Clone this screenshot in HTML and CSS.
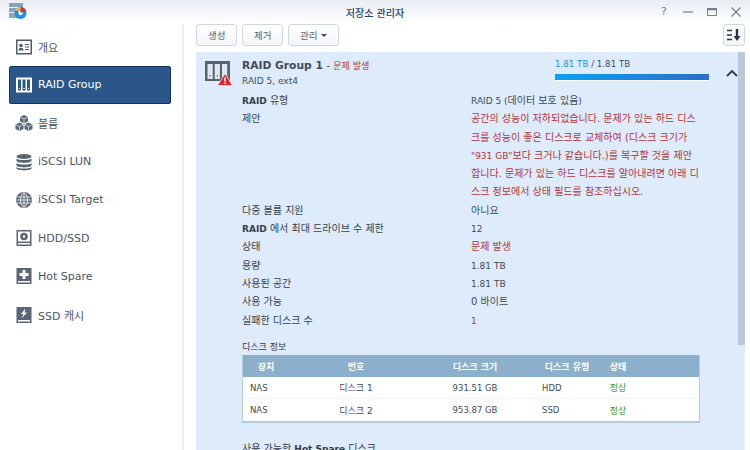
FILE: index.html
```html
<!DOCTYPE html>
<html lang="ko">
<head>
<meta charset="utf-8">
<title>저장소 관리자</title>
<link rel="stylesheet" href="styles.css">
</head>
<body>
<div class="window">
  <header class="titlebar">
    <svg class="app-icon" width="28" height="24" viewBox="0 0 28 24">
      <rect x="9" y="4" width="14" height="15" fill="#8aa2bb"/>
      <rect x="9" y="8" width="14" height="1" fill="#e8eef4"/>
      <rect x="9" y="13" width="14" height="1" fill="#e8eef4"/>
      <circle cx="20.500" cy="14" r="6" fill="#1a8fe6"/>
      <circle cx="20.500" cy="14" r="2.200" fill="#fff"/>
      <path d="M20.500 8a6 6 0 0 1 5.500 3.500l-5.500 2.500z" fill="#d9342b"/>
      <path d="M15 12a6 6 0 0 1 5.500-4v3.500z" fill="#f2b632"/>
    </svg>
    <div class="title">저장소 관리자</div>
    <div class="win-controls">
      <span class="help">?</span>
      <svg width="12" height="12" viewBox="0 0 12 12"><path d="M1 6h10" stroke="#6f7d8a" stroke-width="1.200"/></svg>
      <svg width="12" height="12" viewBox="0 0 12 12"><path d="M1.500 2.500h9v7h-9z" fill="none" stroke="#6f7d8a"/><path d="M1.500 3.500h9" stroke="#6f7d8a" stroke-width="1.500"/></svg>
      <svg width="12" height="12" viewBox="0 0 12 12"><path d="M1.500 1.500l9 9M10.500 1.500l-9 9" stroke="#6f7d8a" stroke-width="1.100"/></svg>
    </div>
  </header>
  <div class="body">
    <nav class="sidebar">
      <a class="nav-item">
        <svg class="nav-icon" viewBox="0 0 18 18"><rect x="1" y="1.500" width="16" height="15" fill="#4f5b69"/><rect x="2.500" y="3" width="13" height="12" fill="#fff"/><circle cx="6" cy="7.500" r="1.800" fill="#4f5b69"/><path d="M3.500 12.500c0-2 1-2.700 2.500-2.700s2.500.7 2.500 2.700z" fill="#4f5b69"/><path d="M10 6.500h4M10 9h4M10 11.500h4" stroke="#4f5b69" stroke-width="1.100"/></svg>
        <span>개요</span>
      </a>
      <a class="nav-item active">
        <svg class="nav-icon" viewBox="0 0 18 18"><rect x="1" y="1.500" width="16" height="15" fill="#fff"/><rect x="3" y="3.500" width="3" height="11" fill="#2a5688"/><rect x="7.500" y="3.500" width="3" height="11" fill="#2a5688"/><rect x="12" y="3.500" width="3" height="11" fill="#2a5688"/><path d="M4.500 12v1M9 12v1M13.500 12v1" stroke="#fff"/></svg>
        <span>RAID Group</span>
      </a>
      <a class="nav-item">
        <svg class="nav-icon" viewBox="0 0 18 18"><g fill="#5a6673"><path d="M9 1l4 2v4.500l-4 2-4-2V3z"/><path d="M4.500 8.500l4 2V15l-4 2-4-2v-4.500z"/><path d="M13.500 8.500l4 2V15l-4 2-4-2v-4.500z"/></g><path d="M5 3l4 2 4-2M.500 10.500l4 2 4-2M9.500 10.500l4 2 4-2M9 5v4M4.500 12.500v4M13.500 12.500v4" stroke="#fff" stroke-width=".7" fill="none"/></svg>
        <span>볼륨</span>
      </a>
      <a class="nav-item">
        <svg class="nav-icon" viewBox="0 0 18 18"><g fill="#5a6673"><ellipse cx="9" cy="3.500" rx="7.500" ry="2.500"/><path d="M1.500 5.500C3 7.500 15 7.500 16.500 5.500V8c-1 2.500-14 2.500-15 0z"/><path d="M1.500 10c1.500 2 13.500 2 15 0v2.500c-1 2.500-14 2.500-15 0z"/><path d="M1.500 14c1.500 2 13.500 2 15 0v1.500c-1 2.500-14 2.500-15 0z"/></g></svg>
        <span>iSCSI LUN</span>
      </a>
      <a class="nav-item">
        <svg class="nav-icon" viewBox="0 0 18 18"><circle cx="9" cy="9" r="8" fill="#5a6673"/><g fill="none" stroke="#fff" stroke-width=".8"><ellipse cx="9" cy="9" rx="3.500" ry="7"/><path d="M9 1.500v15M2 6h14M2 12h14M1.500 9h15"/></g></svg>
        <span>iSCSI Target</span>
      </a>
      <a class="nav-item">
        <svg class="nav-icon" viewBox="0 0 18 18"><rect x="1.500" y="1" width="15" height="16" fill="#5a6673"/><rect x="3" y="2.500" width="12" height="10" fill="#fff"/><circle cx="9" cy="7.500" r="3.800" fill="#5a6673"/><circle cx="9" cy="7.500" r="1.200" fill="#fff"/><rect x="3" y="14" width="12" height="1.500" fill="#fff"/></svg>
        <span>HDD/SSD</span>
      </a>
      <a class="nav-item">
        <svg class="nav-icon" viewBox="0 0 18 18"><rect x="1.500" y="1" width="15" height="16" fill="#5a6673"/><rect x="3" y="14" width="12" height="1.500" fill="#fff"/><path d="M9 3v9M4.500 7.500h9" stroke="#fff" stroke-width="2.800"/></svg>
        <span>Hot Spare</span>
      </a>
      <a class="nav-item">
        <svg class="nav-icon" viewBox="0 0 18 18"><rect x="1.500" y="1" width="15" height="16" fill="#5a6673"/><rect x="3" y="14" width="12" height="1.500" fill="#fff"/><path d="M10.500 2.500L6 8h2.500l-2 4.500L12 6.500H9.500z" fill="#fff"/></svg>
        <span>SSD 캐시</span>
      </a>
    </nav>
    <main class="main">
      <div class="toolbar">
        <button class="btn">생성</button>
        <button class="btn">제거</button>
        <button class="btn">관리<i class="caret"></i></button>
        <button class="btn sort">
          <svg width="16" height="14" viewBox="0 0 16 14"><path d="M1 2.500h5M1 7h5M1 11.500h5" stroke="#2b3641" stroke-width="1.600"/><path d="M11 1v8" stroke="#2b3641" stroke-width="2.400"/><path d="M7.500 8h7L11 13z" fill="#2b3641"/></svg>
        </button>
      </div>
      <div class="panel-wrap">
        <section class="panel">
          <div class="group-head">
            <svg class="raid-icon" width="28" height="28" viewBox="0 0 28 28">
              <rect x="0" y="2" width="25" height="20" fill="#59636e"/>
              <rect x="2.500" y="5" width="5.200" height="15" fill="#dfe8f2"/>
              <rect x="9.700" y="5" width="5.200" height="15" fill="#dfe8f2"/>
              <rect x="17" y="5" width="5.200" height="15" fill="#dfe8f2"/>
              <path d="M5 16v1.500M12.300 16v1.500M19.600 16v1.500" stroke="#59636e"/>
              <path d="M20 14.500L27.500 26.500H12.500z" fill="#e0262c" stroke="#dfe9f6" stroke-width=".8"/>
              <path d="M20 18.500v4M20 23.500v1.500" stroke="#fff" stroke-width="1.500"/>
            </svg>
            <div class="group-title">
              <div class="group-name"><strong>RAID Group 1</strong> - <span class="danger small">문제 발생</span></div>
              <div class="group-sub">RAID 5, ext4</div>
            </div>
            <div class="usage">
              <div class="usage-text"><span class="used">1.81 TB</span> / 1.81 TB</div>
              <div class="bar"><div class="bar-fill"></div></div>
            </div>
            <svg class="chevron" width="12" height="8" viewBox="0 0 12 8"><path d="M1 7l5-5 5 5" fill="none" stroke="#1d3e66" stroke-width="1.800"/></svg>
          </div>
          <dl class="details">
            <dt><b class="lat">RAID</b> 유형</dt><dd><span class="lat">RAID 5 (</span>데이터 보호 있음<span class="lat">)</span></dd>
            <dt>제안</dt><dd class="danger">공간의 성능이 저하되었습니다. 문제가 있는 하드 디스<br>크를 성능이 좋은 디스크로 교체하여 (디스크 크기가<br><span class="lat">"931 GB"</span>보다 크거나 같습니다.)를 복구할 것을 제안<br>합니다. 문제가 있는 하드 디스크를 알아내려면 아래 디<br>스크 정보에서 상태 필드를 참조하십시오.</dd>
            <dt>다중 볼륨 지원</dt><dd>아니요</dd>
            <dt><b class="lat">RAID</b> 에서 최대 드라이브 수 제한</dt><dd class="lat">12</dd>
            <dt>상태</dt><dd class="danger">문제 발생</dd>
            <dt>용량</dt><dd class="lat">1.81 TB</dd>
            <dt>사용된 공간</dt><dd class="lat">1.81 TB</dd>
            <dt>사용 가능</dt><dd>0 바이트</dd>
            <dt>실패한 디스크 수</dt><dd class="danger lat">1</dd>
          </dl>
          <h3 class="section-title">디스크 정보</h3>
          <div class="disk-table">
            <div class="row head"><span class="c1">장치</span><span class="c2">번호</span><span class="c3">디스크 크기</span><span class="c4">디스크 유형</span><span class="c5">상태</span></div>
            <div class="row"><span class="c1 left lat">NAS</span><span class="c2">디스크 1</span><span class="c3 lat">931.51 GB</span><span class="c4 left lat">HDD</span><span class="c5 ok">정상</span></div>
            <div class="row"><span class="c1 left lat">NAS</span><span class="c2">디스크 2</span><span class="c3 lat">953.87 GB</span><span class="c4 left lat">SSD</span><span class="c5 ok">정상</span></div>
          </div>
          <h3 class="section-title spare">사용 가능한 <b class="lat">Hot Spare</b> 디스크</h3>
        </section>
        <div class="scrollbar"></div>
      </div>
    </main>
  </div>
</div>
</body>
</html>
```

FILE: styles.css
```css
* { box-sizing: border-box; }
html, body { margin: 0; height: 100%; }
body {
  font-family: "DejaVu Sans", "Noto Sans CJK KR", sans-serif;
  font-size: 10px;
  color: #414b55;
  background: #fff;
  overflow: hidden;
}
.window { width: 750px; height: 450px; display: flex; flex-direction: column; overflow: hidden; }
.titlebar {
  height: 24px;
  flex: none;
  display: flex;
  align-items: center;
  position: relative;
  background: linear-gradient(#e9eef4, #fff);
}
.app-icon { margin-top: -2px; }
.title {
  position: absolute;
  left: 0; right: 0;
  text-align: center;
  font-size: 10px;
  color: #24466e;
  font-weight: 500;
}
.win-controls { margin-left: auto; margin-right: 8px; display: flex; align-items: center; gap: 12px; }
.help { width: 12px; text-align: center; color: #6f7d8a; font-size: 11px; line-height: 12px; }
.body { flex: 1; display: flex; min-height: 0; }
.sidebar {
  width: 184px;
  flex: none;
  padding: 3.500px 11px 0 9px;
  border-right: 2px solid #ebedf0;
  display: flex;
  flex-direction: column;
}
.nav-item {
  height: 38.300px;
  flex: none;
  display: flex;
  align-items: center;
  padding-left: 6px;
  gap: 5px;
  font-size: 11px;
  color: #4c5661;
  border-radius: 2px;
}
.nav-item.active {
  background: #2a5688;
  color: #fff;
  border: 1px solid #11365f;
  padding-left: 5px;
}
.nav-icon { width: 18px; height: 18px; flex: none; }
.main { flex: 1; min-width: 0; padding-left: 12px; display: flex; flex-direction: column; }
.toolbar { height: 28px; flex: none; display: flex; align-items: flex-start; gap: 4.500px; }
.btn {
  height: 22px;
  padding: 0 11px;
  font: inherit;
  font-size: 9.500px;
  color: #58626d;
  background: linear-gradient(#fff, #f2f5f8);
  border: 1px solid #cfd8e2;
  border-radius: 3px;
  display: flex;
  align-items: center;
  gap: 4px;
}
.caret { width: 0; height: 0; border: 3px solid transparent; border-top-color: #414b55; border-bottom: 0; }
.sort { margin-left: auto; margin-right: 5px; width: 22px; padding: 0; justify-content: center; }
.panel-wrap { flex: 1; min-height: 0; display: flex; background: #deebfb; overflow: hidden; margin-right: 5px; }
.panel { flex: 1; min-width: 0; padding: 6px 0 0 9px; }
.scrollbar { width: 7px; height: 293px; flex: none; background: #b9c8da; }
.group-head { display: flex; align-items: flex-start; height: 33px; }
.raid-icon { flex: none; margin-top: 1px; }
.group-title { margin-left: 9px; width: 313px; flex: none; }
.group-name { font-size: 10.500px; line-height: 14px; color: #414b55; }
.group-name strong { font-weight: 700; font-size: 10.700px; }
.group-sub { margin-top: 2px; font-size: 9px; line-height: 12px; }
.usage { width: 154px; flex: none; font-size: 8.700px; line-height: 12px; }
.used { color: #1a8fe0; }
.bar { margin-top: 4px; height: 7px; background: #fff; padding: 0 0 1px; }
.bar-fill { height: 6px; background: linear-gradient(90deg, #0ba0f5, #2a6fc8); }
.chevron { margin: 11px 0 0 17px; flex: none; }
.details {
  margin: 1px 0 0 37px;
  display: grid;
  grid-template-columns: 229px 1fr;
  line-height: 18.300px;
  font-size: 10px;
}
.details dt { font-weight: 400; color: #36404a; }
.details dd { margin: 0; }
.lat { font-size: 9px; }
.danger { color: #b0363a; }
.small { font-size: 9px; }
.section-title { margin: 10px 0 0 37px; font-size: 9px; font-weight: 400; line-height: 14px; color: #333c45; }
.disk-table {
  margin: 1px 0 0 37px;
  width: 458px;
  background: #fff;
  border: 1px solid #b3cbe0;
  border-top: 0;
  border-bottom-width: 2px;
}
.row { display: flex; height: 22px; align-items: center; padding-top: 1px; font-size: 9px; border-bottom: 1px solid #f2f5f9; }
.row:last-child { border-bottom: 0; }
.row.head { background: #8cb0cb; color: #fff; font-weight: 700; border-bottom: 0; }
.row span { flex: none; text-align: center; }
.row .lat { font-size: 8.500px; }
.c1 { width: 32px; margin-left: 7px; }
.c2 { width: 114px; margin-left: 17px; }
.c3 { width: 80px; margin-left: 22px; }
.c4 { width: 50px; margin-left: 27px; }
.c5 { width: 24px; margin-left: 14px; }
.row .left { text-align: left; }
.ok { color: #2f9a2f; }
.spare { margin-top: 19px; font-size: 10px; }
```
